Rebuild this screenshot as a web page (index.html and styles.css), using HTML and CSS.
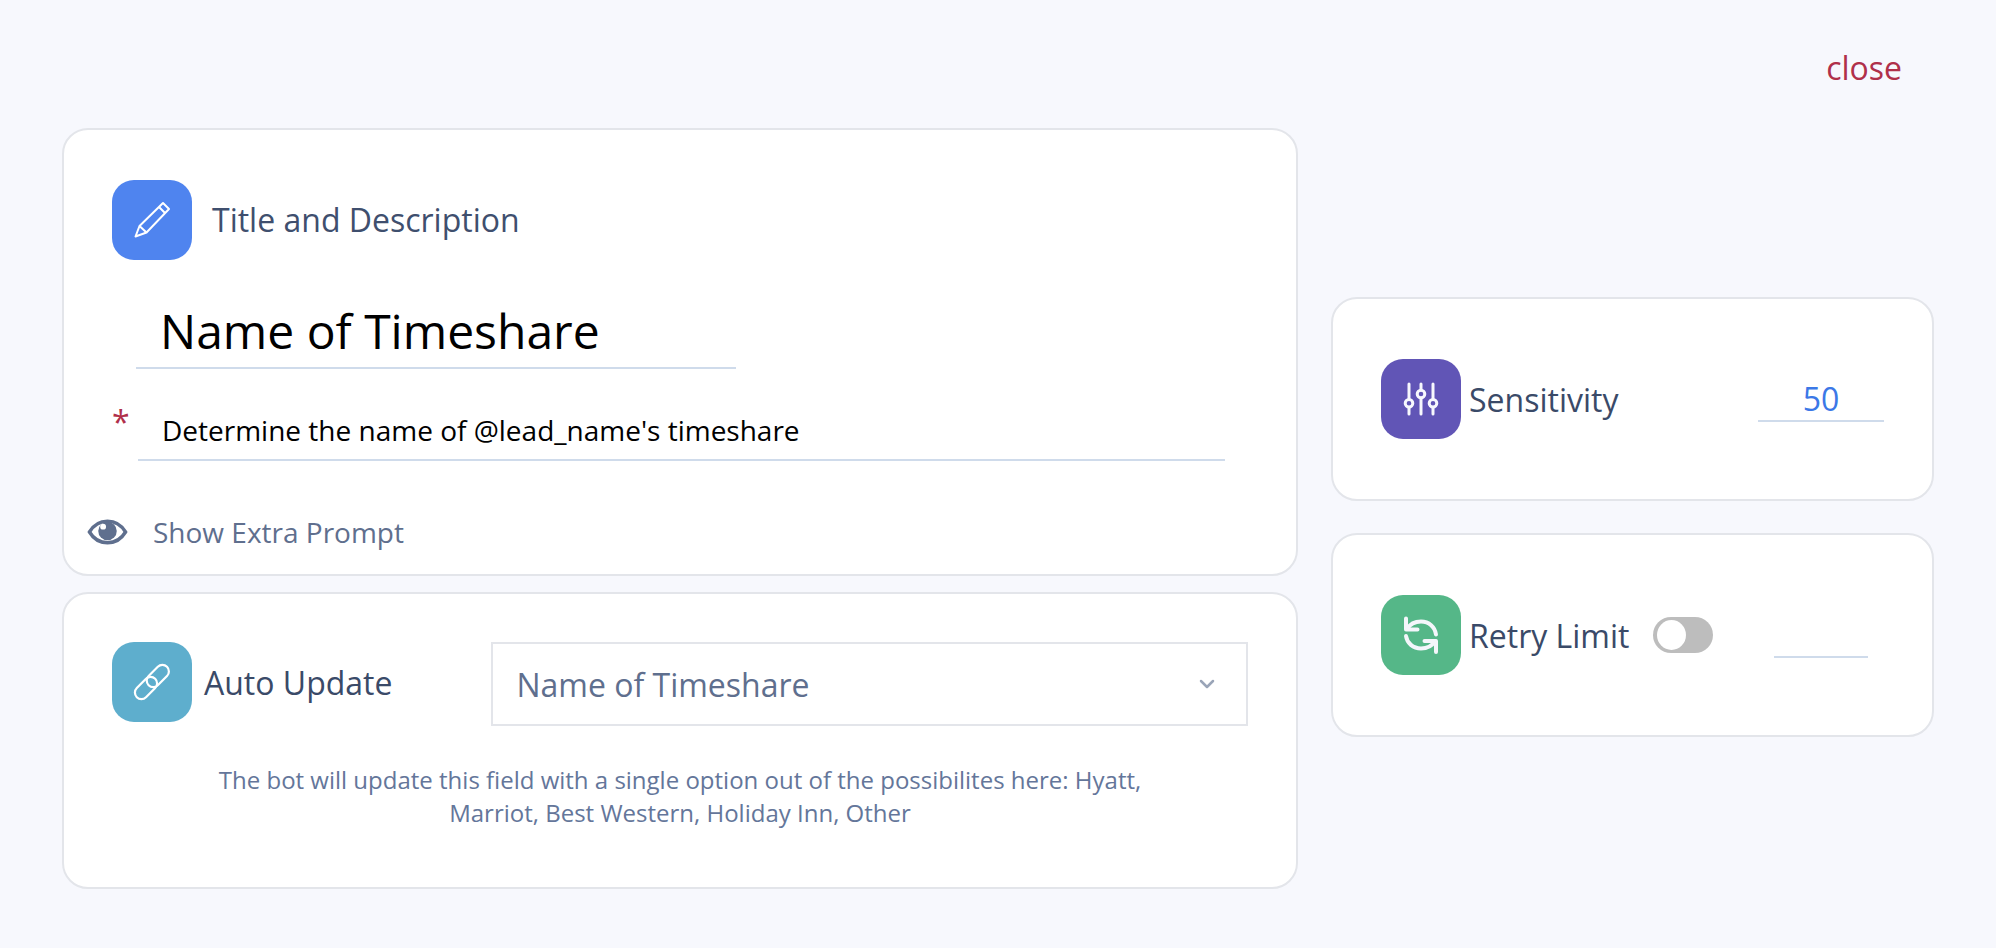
FILE: index.html
```html
<!DOCTYPE html>
<html lang="en">
<head>
<meta charset="utf-8">
<title>Field settings</title>
<link rel="stylesheet" href="styles.css">
</head>
<body>
<div class="page">
  <header class="topbar"><span class="close">close</span></header>
  <main class="columns">
    <section class="left">
      <div class="card card-title">
        <div class="head">
          <span class="tile tile-blue">
            <svg viewBox="0 0 40 40" width="40" height="40" fill="none" stroke="#fff" stroke-width="2" stroke-linejoin="round"><path d="M3.500 36.500 7.500 26 31 3l6 6-22.500 23.500Z"/><path d="M7.500 26l7 6.500M27 7l6 6"/></svg>
          </span>
          <span class="head-label">Title and Description</span>
        </div>
        <div class="name-field">Name of Timeshare</div>
        <div class="desc-row">
          <span class="star">*</span>
          <div class="desc-field">Determine the name of @lead_name's timeshare</div>
        </div>
        <div class="extra">
          <svg class="eye" viewBox="0 0 42 26" width="41" height="26"><path d="M2.500 13C7 5.500 13.500 2 21 2s14 3.500 18.500 11C35 20.500 28.500 24 21 24S7 20.500 2.500 13Z" fill="none" stroke="#5f6f8e" stroke-width="3.500"/><circle cx="21" cy="12" r="9.500" fill="#5f6f8e"/><circle cx="16.500" cy="7.500" r="3" fill="#fff"/></svg>
          <span class="extra-label">Show Extra Prompt</span>
        </div>
      </div>
      <div class="card card-auto">
        <div class="auto-row">
          <span class="tile tile-cyan">
            <svg viewBox="0 0 40 40" width="40" height="40" fill="none" stroke="#fff" stroke-width="2.200"><rect x="19.300" y="1" width="13" height="26" rx="6.500" transform="rotate(45 25.800 14)"/><rect x="7.500" y="13" width="13" height="26" rx="6.500" transform="rotate(45 14 26)"/></svg>
          </span>
          <span class="auto-label">Auto Update</span>
          <div class="select">
            <span>Name of Timeshare</span>
            <svg viewBox="0 0 16 10" width="16" height="10" fill="none" stroke="#9aa5b8" stroke-width="2.500" stroke-linecap="round" stroke-linejoin="round"><path d="M2 2l6 6 6-6"/></svg>
          </div>
        </div>
        <p class="help">The bot will update this field with a single option out of the possibilites here: Hyatt,<br>Marriot, Best Western, Holiday Inn, Other</p>
      </div>
    </section>
    <aside class="right">
      <div class="card card-side">
        <span class="tile tile-purple">
          <svg viewBox="0 0 40 40" width="40" height="40" fill="none" stroke="#f7f8fd" stroke-width="3" stroke-linecap="round"><path d="M8 5v15M8 29v6M20 5v6M20 20v15M32 5v15M32 29v6"/><circle cx="8" cy="24.300" r="3.800"/><circle cx="20" cy="15" r="3.800"/><circle cx="32" cy="24.300" r="3.800"/></svg>
        </span>
        <span class="side-label">Sensitivity</span>
        <span class="spacer"></span>
        <div class="num num-wide">50</div>
      </div>
      <div class="card card-side">
        <span class="tile tile-green">
          <svg viewBox="0 0 40 40" width="40" height="40" fill="none" stroke="#f4f6fb" stroke-width="4" stroke-linecap="round" stroke-linejoin="round"><path d="M5 3.500v11h11.500"/><path d="M6 14c3-5 8-7.500 14-7.500 8 0 14 5.500 15 13"/><path d="M35 37V26H23.500"/><path d="M34 26c-3 5-8 7.500-14 7.500-8 0-14-5.500-15-12.500"/></svg>
        </span>
        <span class="side-label">Retry Limit</span>
        <span class="toggle"><span class="knob"></span></span>
        <span class="spacer"></span>
        <div class="num num-narrow"></div>
      </div>
    </aside>
  </main>
</div>
</body>
</html>
```

FILE: styles.css
```css
* { box-sizing: border-box; }
html, body { margin: 0; height: 948px; overflow: hidden; }
body { background: #f7f8fd; font-family: "Open Sans", sans-serif; color: #3a4a68; }
.page { padding: 0 62px; }
.topbar { height: 128px; display: flex; justify-content: flex-end; padding: 46px 32px 0 0; }
.close { font-size: 32px; line-height: 44px; color: #b0304a; }
.columns { display: flex; gap: 33px; align-items: flex-start; }
.left { width: 1236px; flex: none; display: flex; flex-direction: column; gap: 16px; }
.right { width: 603px; flex: none; padding-top: 169px; display: flex; flex-direction: column; gap: 32px; }
.card { background: #fff; border: 2px solid #e3e5ea; border-radius: 26px; }
.tile { width: 80px; height: 80px; flex: none; border-radius: 22px; display: flex; align-items: center; justify-content: center; }
.tile-blue { background: #4f84ef; }
.tile-cyan { background: #5eaecd; }
.tile-purple { background: #6155b6; }
.tile-green { background: #55b788; }
.card-title { height: 448px; padding: 50px 0 0 48px; }
.head { display: flex; align-items: center; gap: 20px; }
.head-label { font-size: 32px; line-height: 44px; color: #3f4f6e; }
.name-field { width: 600px; margin: 38px 0 0 24px; padding: 0 0 0 24px; height: 71px; border-bottom: 2px solid #cfdbeb; font-size: 48px; line-height: 66px; color: #000; }
.desc-row { position: relative; }
.star { position: absolute; left: 0; top: 31px; font-size: 32px; line-height: 44px; color: #b0304a; }
.desc-field { width: 1087px; margin-left: 26px; height: 92px; padding: 42px 0 0 24px; border-bottom: 2px solid #cfdbeb; font-size: 28px; line-height: 38px; color: #000; }
.extra { display: flex; align-items: center; gap: 25px; margin: 52px 0 0 -25px; }
.extra-label { font-size: 28px; line-height: 38px; color: #5f6f8e; }
.card-auto { height: 297px; padding: 48px 48px 0; }
.auto-row { display: flex; align-items: flex-start; }
.auto-label { width: 288px; margin-left: 12px; font-size: 32px; line-height: 82px; color: #3a4a68; }
.select { width: 758px; height: 84px; border: 2px solid #e3e5ea; display: flex; align-items: center; justify-content: space-between; padding: 0 31px 0 23px; font-size: 32px; color: #5f6f8e; }
.help { margin: 37px -48px 0; text-align: center; font-size: 24px; line-height: 33px; color: #64769a; }
.card-side { height: 204px; display: flex; align-items: center; padding: 0 0 0 48px; }
.side-label { margin-left: 8px; padding-top: 2px; font-size: 32px; line-height: 44px; color: #3a4a68; }
.spacer { flex: 1; }
.toggle { width: 60px; height: 36px; margin-left: 24px; background: #bdbdbd; border-radius: 18px; padding: 3px 4px; }
.knob { display: block; width: 29px; height: 30px; border-radius: 50%; background: #fff; }
.num { border-bottom: 2px solid #cfdbeb; text-align: center; color: #3b78e7; font-size: 32px; line-height: 48px; height: 47px; margin-bottom: 1px; }
.num-wide { width: 126px; margin-right: 48px; }
.num-narrow { width: 94px; margin-right: 64px; }
```
